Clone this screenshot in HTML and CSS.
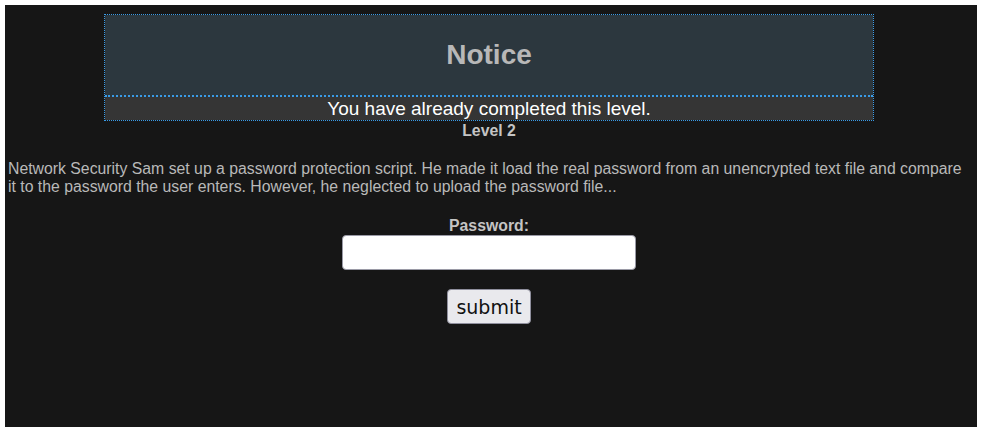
FILE: index.html
```html
<!DOCTYPE html>
<html>
<head>
<meta charset="utf-8">
<link rel="stylesheet" href="styles.css">
</head>
<body>
<div class="page">
  <div class="notice">
    <div class="notice-head">Notice</div>
    <div class="notice-msg">You have already completed this level.</div>
  </div>
  <div class="level">Level 2</div>
  <p class="desc">Network Security Sam set up a password protection script. He made it load the real password from an unencrypted text file and compare it to the password the user enters. However, he neglected to upload the password file...</p>
  <form class="form">
    <label class="label" for="pw">Password:</label>
    <input class="input" id="pw" type="password">
    <button class="submit" type="button">submit</button>
  </form>
</div>
</body>
</html>
```

FILE: styles.css
```css
html { background: #ffffff; }
body {
  margin: 5px;
  font-family: "Liberation Sans", Arial, sans-serif;
}
.page {
  background: #161616;
  height: 422px;
  box-sizing: border-box;
  padding: 9px 7px 0 3px;
  color: #b9b9b9;
}
.notice {
  width: 770px;
  margin: 0 auto;
  box-sizing: border-box;
  border: 1px dotted #3a9be6;
}
.notice-head {
  height: 80px;
  background: #2c373e;
  border-bottom: 2px dotted #3a9be6;
  display: flex;
  align-items: center;
  justify-content: center;
  font-size: 28px;
  font-weight: bold;
  color: #b8b8b8;
}
.notice-msg {
  background: #353535;
  color: #ffffff;
  font-size: 19px;
  line-height: 23px;
  height: 23px;
  text-align: center;
}
.level {
  margin-top: 1px;
  text-align: center;
  font-weight: bold;
  font-size: 15.8px;
  line-height: 18px;
  color: #c4c4c4;
}
.desc {
  margin: 20px 0 0 0;
  font-size: 15.8px;
  line-height: 18px;
  color: #b9b9b9;
}
.form {
  margin-top: 21px;
  display: flex;
  flex-direction: column;
  align-items: center;
}
.label {
  font-weight: bold;
  font-size: 15.8px;
  line-height: 18px;
  color: #c4c4c4;
}
.input {
  margin-top: 0;
  width: 294px;
  height: 35px;
  box-sizing: border-box;
  border: 1px solid #9a9aa6;
  border-radius: 4px;
  background: #ffffff;
}
.submit {
  margin-top: 19px;
  width: 84px;
  height: 35px;
  box-sizing: border-box;
  font-family: "DejaVu Sans", sans-serif;
  font-size: 19px;
  color: #111;
  background: #e9e9ed;
  border: 1px solid #8f8f9d;
  border-radius: 4px;
  padding: 0;
}
```
